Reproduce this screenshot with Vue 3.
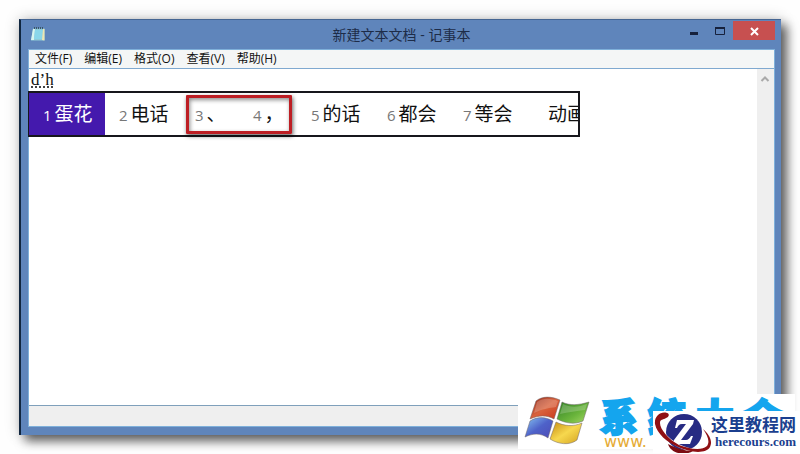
<template>
  <main class="page">
    <section class="window" aria-label="记事本">
      <header class="titlebar">
        <svg class="app-icon" viewBox="0 0 16 16" aria-hidden="true">
          <path d="M3 2.5 L14.5 2.5 L14.5 14.5 L1 14.5 Z" fill="#8fcbd8" />
          <path d="M3 3 L5 3 L4 14 L1 14 Z" fill="#d9f4ef" />
          <path d="M5 4 L13 4 L12 13 L4 13 Z" fill="#8ad6ea" />
          <path d="M12 14 L13 3 L14.5 3 L14.5 14.5 Z" fill="#eee6b2" />
          <path d="M4.5 1v2M6.5 1v2M8.5 1v2M10.5 1v2M12.5 1v2" stroke="#3b5668" />
        </svg>
        <h1 class="title">新建文本文档 - 记事本</h1>
        <div class="window-buttons">
          <button type="button" class="win-btn" aria-label="最小化">
            <svg viewBox="0 0 12 12"><path d="M2 8.5h8" stroke="#16213c" stroke-width="3" /></svg>
          </button>
          <button type="button" class="win-btn" aria-label="最大化">
            <svg viewBox="0 0 12 12"><path d="M1.5 2.5h9v7h-9z" fill="none" stroke="#16213c" /><path d="M1 3h10" stroke="#16213c" stroke-width="2" /></svg>
          </button>
          <button type="button" class="win-btn close" aria-label="关闭">
            <svg viewBox="0 0 12 12"><path d="M3 3l7 7M10 3l-7 7" stroke="#fff" stroke-width="2" /></svg>
          </button>
        </div>
      </header>

      <div class="client">
        <nav class="menu">
          <button v-for="item in menuItems" :key="item" type="button" class="menu-item">{{ item }}</button>
        </nav>

        <div class="editor">
          <textarea v-model="content" class="text" spellcheck="false" aria-label="文本"></textarea>
          <div class="scrollbar">
            <button type="button" class="scroll-up" aria-label="向上滚动">
              <svg viewBox="0 0 10 8"><path d="M1.5 6 L5 2.5 L8.5 6" fill="none" stroke="#a9a9a9" stroke-width="2" /></svg>
            </button>
          </div>

          <div class="candidates">
            <button
              v-for="(word, i) in words"
              :key="word"
              type="button"
              class="candidate"
              :class="{ active: i === selected, narrow: word.length === 1, last: i === words.length - 1 }"
              @click="selected = i"
            >
              <span v-if="i < words.length - 1" class="num">{{ i + 1 }}</span>
              <span class="word">{{ word }}</span>
            </button>
            <div class="highlight"></div>
          </div>
        </div>

        <footer class="status"></footer>
      </div>
    </section>

    <aside class="site-mark">
      <svg class="flag" viewBox="0 0 66 50" aria-hidden="true">
        <defs>
          <linearGradient id="flagRed" x1="0" y1="0" x2="1" y2="1">
            <stop offset="0" stop-color="#8f2a1c" />
            <stop offset="0.5" stop-color="#d9623c" />
            <stop offset="1" stop-color="#c8371c" />
          </linearGradient>
          <linearGradient id="flagGreen" x1="0" y1="0" x2="1" y2="1">
            <stop offset="0" stop-color="#2f7f25" />
            <stop offset="0.6" stop-color="#6bb53c" />
            <stop offset="1" stop-color="#a5d866" />
          </linearGradient>
          <linearGradient id="flagBlue" x1="0" y1="0" x2="1" y2="1">
            <stop offset="0" stop-color="#86c3f2" />
            <stop offset="0.5" stop-color="#4e62c9" />
            <stop offset="1" stop-color="#4d4bb5" />
          </linearGradient>
          <linearGradient id="flagYellow" x1="0" y1="0" x2="1" y2="1">
            <stop offset="0" stop-color="#c58a10" />
            <stop offset="0.5" stop-color="#f7d84e" />
            <stop offset="1" stop-color="#d3a221" />
          </linearGradient>
        </defs>
        <g stroke="#6e6468" stroke-opacity="0.5">
          <path d="M12 5 C18 0 27 0 36 4 L30 23 C23 19 15 19 6 23 Z" fill="url(#flagRed)" />
          <path d="M38 6 C46 10 55 9 65 6 L59 25 C50 29 41 27 33 23 Z" fill="url(#flagGreen)" />
          <path d="M6 25 C14 20 22 21 29 25 L24 42 C17 37 9 37 1 41 Z" fill="url(#flagBlue)" />
          <path d="M32 26 C40 30 49 31 58 27 L53 44 C45 50 34 48 26 43 Z" fill="url(#flagYellow)" />
        </g>
        <path d="M13 6 C20 1 28 3 34 5 L32 11 C25 12 18 13 10 17 Z" fill="#fff" opacity="0.2" />
        <path d="M39 8 C47 12 55 11 63 8 L61 14 C53 15 44 16 36 18 Z" fill="#fff" opacity="0.2" />
      </svg>
      <div class="site-text">
        <p class="site-name"><span v-for="ch in siteName" :key="ch">{{ ch }}</span></p>
        <p class="site-url">www.</p>
      </div>
    </aside>

    <aside class="badge">
      <svg class="badge-logo" viewBox="0 0 58 42" aria-hidden="true">
        <circle cx="31" cy="21" r="18" fill="#272b83" />
        <path d="M24 9 H41 L40 13 L28 29 H33 C35 29 37 27 38 25 L40 25 L37 33 H20 L21 29 L33 13 H29 C26 13 25 15 24 17 L22 17 Z" fill="#fff" />
        <path d="M10 9 C4 15 10 25 21 32 C32 39 46 42 53 37 C57 33 55 25 50 19" fill="none" stroke="#fff" stroke-width="3" />
        <path d="M15 33 C18 43 32 45 40 40 C31 40 23 37 15 33 Z" fill="#7c0c12" />
        <path d="M14 2 C8 0 1 5 2 13 C4 23 14 31 25 36 C38 42 53 43 57 36 C60 30 56 23 50 18 C55 25 57 31 54 35 C49 40 36 38 26 34 C15 28 7 18 7 12 C7 8 10 9 13 7 C16 6 17 3 14 2 Z" fill="#8f1014" />
      </svg>
      <div class="badge-text">
        <p class="badge-name">这里教程网</p>
        <p class="badge-url">herecours.com</p>
      </div>
    </aside>
  </main>
</template>

<script setup>
import { ref } from 'vue'

const menuItems = ['文件(F)', '编辑(E)', '格式(O)', '查看(V)', '帮助(H)']
const words = ['蛋花', '电话', '、', '，', '的话', '都会', '等会', '动画']
const siteName = ['系', '统', '大', '全']

const content = ref('d’h')
const selected = ref(0)
</script>

<style>
body {
  margin: 0;
  background: #fefefe;
}
</style>

<style scoped>
.page {
  position: relative;
  display: flex;
  box-sizing: border-box;
  min-height: 100vh;
  padding: 19px;
  overflow: hidden;
  font-family: "Open Sans", "Noto Sans CJK SC", sans-serif;
}

button {
  padding: 0;
  border: none;
  background: none;
  color: inherit;
  font-family: inherit;
}

p {
  margin: 0;
}

svg {
  display: block;
}

.window {
  flex: 1;
  display: flex;
  flex-direction: column;
  box-sizing: border-box;
  padding: 0 6px 8px 7px;
  border-left: 2px solid #10263f;
  border-top: 1px solid #456592;
  background: #5f85bb;
  box-shadow: 6px 6px 10px rgba(0, 0, 0, 0.6), 0 0 14px rgba(0, 0, 0, 0.2);
}

.titlebar {
  display: grid;
  grid-template-columns: 1fr auto 1fr;
  height: 29px;
}

.app-icon {
  width: 16px;
  height: 16px;
  margin: 6px 0 0 2px;
}

.title {
  margin: 0;
  font-size: 14px;
  font-weight: 400;
  line-height: 29px;
  color: #1d2c48;
}

.window-buttons {
  display: flex;
  justify-content: flex-end;
  align-items: flex-start;
  margin-top: 1px;
}

.win-btn {
  display: flex;
  align-items: center;
  justify-content: center;
  width: 26px;
  height: 19px;
}

.win-btn svg {
  width: 12px;
  height: 12px;
}

.win-btn.close {
  width: 42px;
  background: #c75050;
}

.client {
  flex: 1;
  display: flex;
  flex-direction: column;
  border: 1px solid #7fb0da;
  background: #fff;
}

.menu {
  display: flex;
  gap: 12px;
  height: 18px;
  padding-left: 6px;
  background: #f4f6f6;
}

.menu-item {
  font-size: 12px;
  line-height: 18px;
  color: #111;
}

.editor {
  position: relative;
  flex: 1;
  display: flex;
  border-top: 1px solid #7fa9d0;
  border-bottom: 1px solid #7fa0bb;
}

.text {
  flex: 1;
  min-width: 0;
  padding: 2px;
  border: none;
  outline: none;
  resize: none;
  background: #fff;
  font-family: "Liberation Serif", serif;
  font-size: 17px;
  line-height: 18px;
  color: #111;
  text-decoration: underline dotted #222;
  text-underline-offset: 2px;
}

.scrollbar {
  width: 17px;
  background: #efefef;
}

.scroll-up {
  display: flex;
  align-items: center;
  justify-content: center;
  width: 15px;
  height: 19px;
}

.scroll-up svg {
  width: 10px;
  height: 8px;
}

.candidates {
  position: absolute;
  top: 22px;
  left: -1px;
  display: flex;
  box-sizing: border-box;
  width: 552px;
  max-width: 100%;
  height: 46px;
  border: 2px solid #17171c;
  border-left-width: 1px;
  background: #fff;
}

.candidate {
  flex: none;
  display: flex;
  align-items: center;
  gap: 3px;
  box-sizing: border-box;
  width: 76px;
  padding-left: 14px;
  white-space: nowrap;
  color: #111;
}

.candidate.narrow {
  width: 58px;
}

.candidate.active {
  background: #4419ad;
  color: #fff;
}

.candidate.last {
  flex: 1;
  min-width: 0;
  padding-left: 23px;
  overflow: hidden;
}

.num {
  padding-top: 2px;
  font-size: 15px;
  line-height: 20px;
  color: #777;
}

.active .num {
  color: #fff;
}

.word {
  font-size: 19px;
  line-height: 26px;
}

.highlight {
  position: absolute;
  top: 2px;
  left: 157px;
  box-sizing: border-box;
  width: 106px;
  height: 39px;
  border: 3px solid #bd1e24;
  border-radius: 1px;
  box-shadow: 1px 2px 4px rgba(0, 0, 0, 0.6), inset 1px 2px 4px rgba(0, 0, 0, 0.45);
  pointer-events: none;
}

.status {
  height: 20px;
  background: #efefef;
}

.site-mark {
  position: absolute;
  right: 5px;
  bottom: 5px;
  display: flex;
  gap: 10px;
  box-sizing: border-box;
  width: 277px;
  height: 55px;
  padding: 2px 0 0 6px;
  background: #fff;
}

.flag {
  flex: none;
  width: 66px;
  height: 50px;
}

.site-name {
  display: flex;
  gap: 10px;
  font-size: 38px;
  font-weight: 900;
  line-height: 40px;
  color: #14a5ee;
  -webkit-text-stroke: 2px #14a5ee;
}

.site-url {
  padding-left: 4px;
  font-family: "DejaVu Sans", sans-serif;
  font-size: 16px;
  line-height: 12px;
  color: #e5ab35;
}

.badge {
  position: absolute;
  right: 0;
  bottom: 1px;
  display: flex;
  box-sizing: border-box;
  width: 147px;
  height: 42px;
  background: #fff;
}

.badge-logo {
  flex: none;
  width: 58px;
  height: 42px;
}

.badge-text {
  display: flex;
  flex-direction: column;
  align-items: flex-end;
  padding-top: 4px;
  color: #1b3f8f;
}

.badge-name {
  font-family: "Noto Sans CJK SC", sans-serif;
  font-size: 17px;
  font-weight: 700;
  line-height: 18px;
  white-space: nowrap;
}

.badge-url {
  font-family: "Liberation Serif", serif;
  font-size: 13px;
  font-weight: 700;
  line-height: 18px;
}
</style>
